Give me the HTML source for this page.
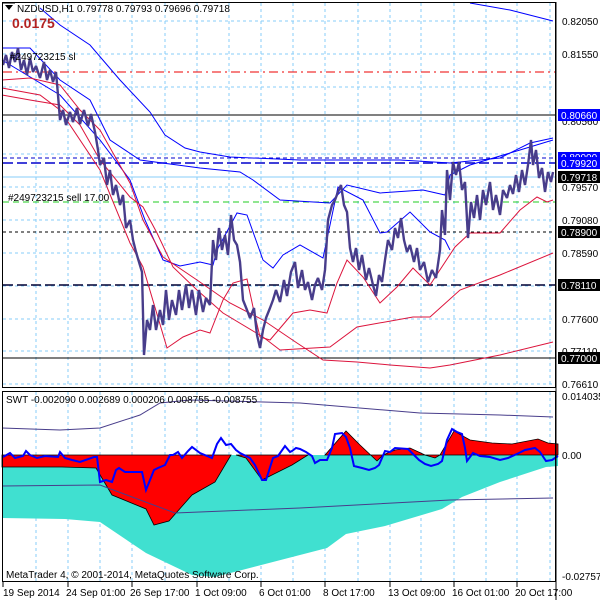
<!DOCTYPE html>
<html><head><meta charset="utf-8"><style>
html,body{margin:0;padding:0;background:#fff;width:600px;height:600px;overflow:hidden}
svg{display:block;font-family:"Liberation Sans",sans-serif}
</style></head><body>
<svg width="600" height="600" viewBox="0 0 600 600" xmlns="http://www.w3.org/2000/svg">
<rect width="600" height="600" fill="#fff"/>
<g stroke="#87cefa" stroke-width="1" stroke-dasharray="3,3">
<path d="M36 3V386M68 3V386M100 3V386M132 3V386M165 3V386M197 3V386M229 3V386M261 3V386M293 3V386M325 3V386M358 3V386M390 3V386M421 3V386M454 3V386M486 3V386M517 3V386M550 3V386"/>
<path d="M36 392V582M68 392V582M100 392V582M132 392V582M165 392V582M197 392V582M229 392V582M261 392V582M293 392V582M325 392V582M358 392V582M390 392V582M421 392V582M454 392V582M486 392V582M517 392V582M550 392V582"/>
<path d="M3 21H556M3 54H556M3 87H556M3 121H556M3 154H556M3 187H556M3 220H556M3 253H556M3 286H556M3 319H556M3 351H556M3 384H556"/>
</g>
<path d="M3 72H556" stroke="#e00" stroke-width="1" stroke-dasharray="9,4,2,4"/>
<path d="M3 115H556" stroke="#000" stroke-width="1"/>
<path d="M3 158H556" stroke="#00c" stroke-width="1" stroke-dasharray="4,3"/>
<path d="M3 163H556" stroke="#00c" stroke-width="1.5" stroke-dasharray="10,4"/>
<path d="M3 177H556" stroke="#87cefa" stroke-width="1"/>
<path d="M3 202H556" stroke="#2c2" stroke-width="1" stroke-dasharray="6,4"/>
<path d="M3 232H556" stroke="#000" stroke-width="1" stroke-dasharray="3,3"/>
<path d="M3 285H556" stroke="#003" stroke-width="1.5" stroke-dasharray="10,4"/>
<path d="M3 358H556" stroke="#000" stroke-width="1"/>
<g fill="none" stroke-width="1">
<polyline stroke="#00f" points="470,3 510,10 553,21"/>
<polyline stroke="#00f" points="40,8 60,25 90,45 120,80 150,112 165,135 185,148 200,152 230,157 300,160 400,160 450,163 500,158 530,143 553,138"/>
<polyline stroke="#00f" points="2,48 30,48 60,80 90,100 110,140 140,160 200,168 240,172 253,180 280,200 330,203 347,185 380,193 423,190 445,195 450,175 470,165 520,150 553,140"/>
<polyline stroke="#00f" points="2,60 60,95 100,140 130,180 145,220 163,260 180,266 200,262 213,265 217,250 237,213 247,215 263,260 273,268 283,255 300,245 323,258 330,225 338,187 363,200 380,233 387,232 410,212 430,232 445,240 450,250"/>
<polyline stroke="#dc143c" points="2,80 30,78 60,85 80,110 100,130 130,183 143,220 163,257 197,280 230,303 263,320 297,343 323,360 357,362 390,365 430,368 450,365 500,355 553,342"/>
<polyline stroke="#dc143c" points="2,95 30,100 60,105 80,125 100,160 130,197 143,207 157,233 173,267 197,290 223,313 263,337 280,350 330,347 357,327 413,317 430,317 460,290 500,275 553,253"/>
<polyline stroke="#dc143c" points="2,88 40,95 60,110 100,170 130,243 143,267 167,348 183,337 200,330 210,333 223,300 233,283 247,279 253,307 260,337 270,340 293,313 310,310 327,313 337,283 347,260 363,277 380,303 397,287 413,268 430,285 455,247 470,233 500,233 520,210 537,197 547,202 553,200"/>
</g>
<polyline fill="none" stroke="#483d8b" stroke-width="2.4" stroke-linejoin="bevel" points="3,65 6,55 9,68 12,52 15,62 18,48 21,70 24,60 27,75 30,58 33,72 36,66 40,78 44,62 47,80 50,70 53,82 56,72 58,95 60,120 63,110 66,125 70,112 73,122 77,108 80,124 84,110 88,126 91,114 95,132 98,150 100,165 104,158 107,185 110,170 113,195 116,185 120,205 123,195 126,228 130,220 133,240 136,252 139,262 142,272 144,355 147,320 150,330 153,305 156,330 160,310 163,325 166,290 169,320 172,300 176,315 179,290 182,310 186,285 189,308 192,290 196,315 199,290 203,312 206,298 210,305 213,240 216,260 219,228 222,250 225,235 228,255 231,215 234,240 237,245 240,262 243,300 247,310 250,318 254,308 257,335 260,348 263,330 266,318 270,308 273,300 276,290 280,302 284,280 287,296 291,272 295,262 298,288 302,270 305,290 308,282 312,300 315,285 318,278 322,290 325,270 328,220 332,205 335,200 338,192 341,185 344,205 347,212 350,248 353,262 356,248 359,270 362,255 366,280 369,268 373,285 376,296 379,275 382,282 385,260 388,240 392,250 395,228 398,238 401,218 404,240 407,252 410,245 414,262 417,248 420,270 424,262 428,282 432,270 436,278 440,250 442,210 445,235 447,170 450,200 453,162 456,175 459,162 462,190 465,182 468,238 471,202 474,218 477,195 480,220 483,190 486,205 490,182 493,210 496,195 500,215 503,190 507,198 510,185 513,194 516,175 519,192 522,170 525,185 528,165 531,140 533,165 536,150 539,178 542,168 545,192 548,172 551,182 553,172"/>
<text x="10" y="60" font-size="10" fill="#000">#249723215 sl</text>
<text x="8" y="201" font-size="10" fill="#000">#249723215 sell 17.00</text>
<path d="M5 5l8 0-4 5z" fill="#000"/>
<path d="M3 3h12" stroke="#000"/>
<text x="17" y="12" font-size="10" fill="#000">NZDUSD,H1  0.79778 0.79793 0.79696 0.79718</text>
<text x="12" y="28" font-size="14" font-weight="bold" fill="#b22222">0.0175</text>
<rect x="2.5" y="2.5" width="553" height="385" fill="none" stroke="#000"/>
<polygon fill="#40e0d0" points="2,455 558,455 558,466 546,467 500,482 462,497 442,509 385,526 346,534 327,548 269,563 215,577 192,575 146,553 100,522 65,519 2,518"/>
<polygon fill="#f00" stroke="#000" stroke-width="0.8" points="2,455 231,455 215,482 192,495 169,521 154,525 146,509 112,495 96,468 62,467 2,467"/>
<polygon fill="#f00" stroke="#000" stroke-width="0.8" points="236,455 308,455 292,465 262,480 246,458"/>
<polygon fill="#f00" stroke="#000" stroke-width="0.8" points="325,455 346,431 360,445 377,461 383,455 395,450 410,448 425,455 435,458 440,455 454,431 470,440 492,443 512,444 538,439 548,443 558,444 558,455"/>
<polyline fill="none" stroke="#483d8b" points="2,428 60,430 100,428 140,415 160,403 190,400 300,403 420,413 500,415 553,417"/>
<polyline fill="none" stroke="#483d8b" points="2,486 100,485 175,513 300,508 450,500 553,498"/>
<polyline fill="none" stroke="#00f" stroke-width="2" points="3,457 10,453 15,458 23,456 26,451 30,455 37,458 45,456 58,457 60,452 65,458 72,460 80,462 94,457 97,457 100,482 106,480 112,482 116,470 119,468 125,472 131,472 138,472 142,472 146,490 150,480 154,470 158,468 165,465 170,455 173,455 178,452 182,458 188,451 192,447 200,453 212,458 217,444 221,438 226,445 231,444 236,450 240,453 250,458 255,465 262,480 266,480 273,458 278,456 285,446 290,452 292,451 296,448 300,449 306,452 312,456 315,463 320,460 327,460 332,448 335,434 342,433 346,437 350,448 354,466 362,468 369,470 375,468 379,465 385,451 390,452 395,448 408,449 414,455 419,460 425,464 431,466 438,464 442,461 447,440 452,429 457,432 462,434 465,448 467,461 470,457 473,453 480,456 490,457 500,460 508,458 519,453 525,450 535,448 540,452 546,461 552,460 558,456"/>
<rect x="2.5" y="391.5" width="553" height="190" fill="none" stroke="#000"/>
<text x="6" y="403" font-size="10" fill="#000">SWT -0.002090 0.002689 0.000206 0.008755 -0.008755</text>
<text x="6" y="578" font-size="10" fill="#000">MetaTrader 4, © 2001-2014, MetaQuotes Software Corp.</text>
<path d="M556 2V600" stroke="#000"/>
<g font-size="10" fill="#000">
<text x="562" y="25">0.82050</text>
<text x="562" y="58">0.81550</text>
<text x="562" y="125">0.80560</text>
<text x="562" y="191">0.79570</text>
<text x="562" y="224">0.79080</text>
<text x="562" y="257">0.78590</text>
<text x="562" y="323">0.77600</text>
<text x="562" y="355">0.77110</text>
<text x="562" y="388">0.76610</text>
<text x="562" y="400">0.014035</text>
<text x="562" y="459">0.00</text>
<text x="562" y="580">-0.027578</text>
</g>
<g font-size="10">
<rect x="558" y="109" width="42" height="12" fill="#00f"/><text x="561" y="119" fill="#fff">0.80660</text>
<rect x="558" y="152" width="42" height="10" fill="#00f"/><text x="561" y="161" fill="#fff">0.80000</text>
<rect x="558" y="157" width="42" height="12" fill="#00f"/><text x="561" y="167" fill="#fff">0.79920</text>
<rect x="558" y="171" width="42" height="12" fill="#000"/><text x="561" y="181" fill="#fff">0.79718</text>
<rect x="558" y="226" width="42" height="12" fill="#000"/><text x="561" y="236" fill="#fff">0.78900</text>
<rect x="558" y="279" width="42" height="12" fill="#000"/><text x="561" y="289" fill="#fff">0.78110</text>
<rect x="558" y="352" width="42" height="12" fill="#000"/><text x="561" y="362" fill="#fff">0.77000</text>
</g>
<g stroke="#000"><path d="M3 582V587M68 582V587M132 582V587M197 582V587M261 582V587M325 582V587M390 582V587M454 582V587M517 582V587"/></g>
<g font-size="10" fill="#000">
<text x="3" y="596">19 Sep 2014</text>
<text x="66" y="596">24 Sep 01:00</text>
<text x="130" y="596">26 Sep 17:00</text>
<text x="195" y="596">1 Oct 09:00</text>
<text x="259" y="596">6 Oct 01:00</text>
<text x="323" y="596">8 Oct 17:00</text>
<text x="388" y="596">13 Oct 09:00</text>
<text x="452" y="596">16 Oct 01:00</text>
<text x="515" y="596">20 Oct 17:00</text>
</g>
</svg>
</body></html>
